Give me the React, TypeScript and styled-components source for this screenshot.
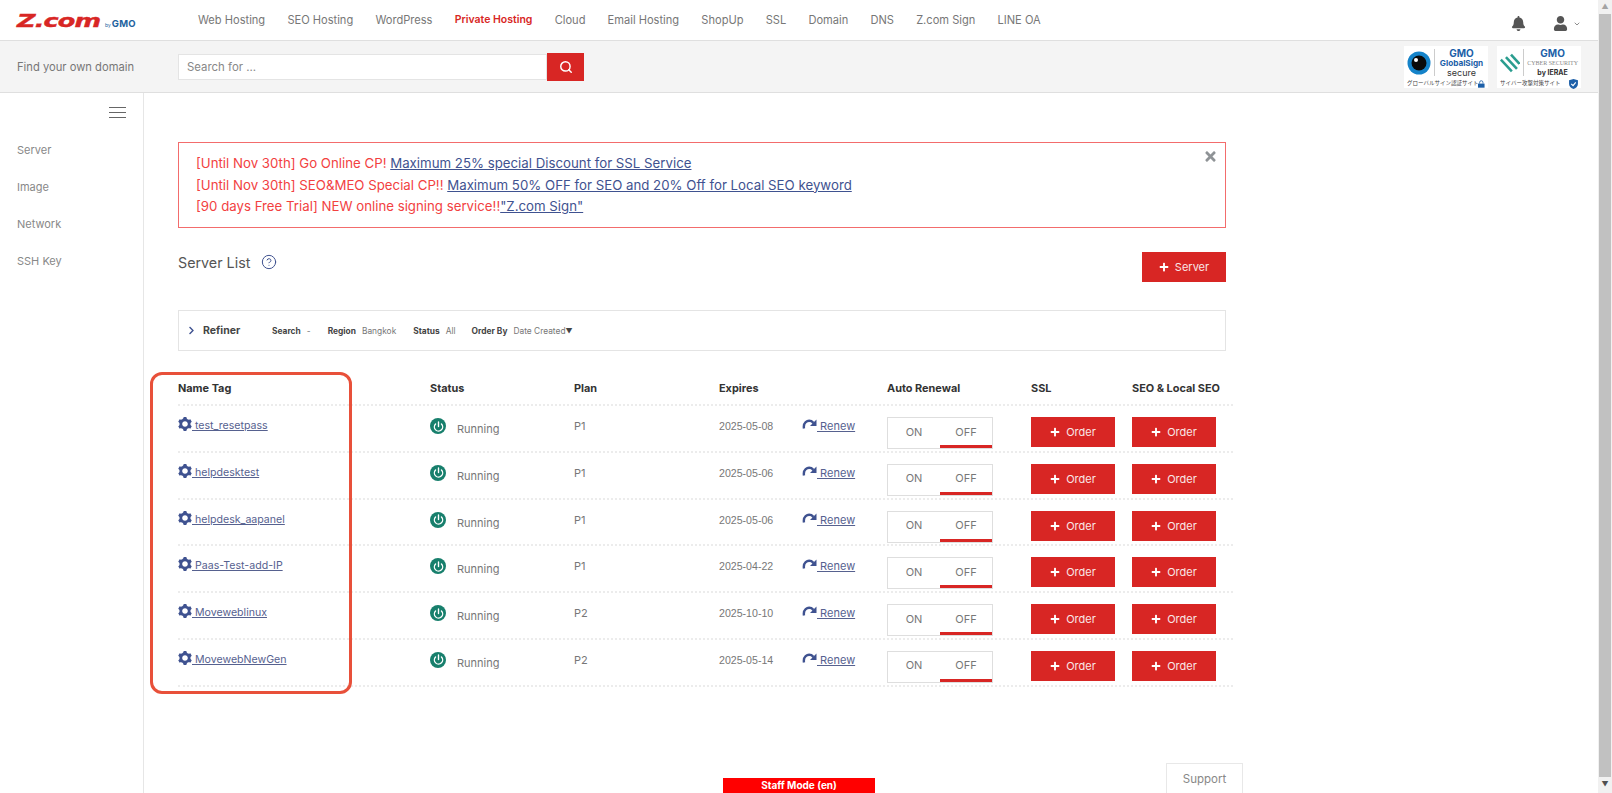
import React from "react";
import styled, { createGlobalStyle } from "styled-components";
import { FaBell, FaUser, FaPlus, FaTimes, FaChevronRight } from "react-icons/fa";
import { ImCog } from "react-icons/im";
import { Search, Power, ChevronDown, CircleHelp } from "lucide-react";

const font = `Inter, "Liberation Sans", sans-serif`;

const GlobalStyle = createGlobalStyle`
  html, body {
    margin: 0;
    padding: 0;
    height: 100%;
    overflow: hidden;
    background: #fff;
    font-family: ${font};
    color: #666;
  }
  * { box-sizing: border-box; }
`;

const Page = styled.div`
  position: relative;
  width: 1612px;
  height: 793px;
  display: flex;
  overflow: hidden;
`;

const Content = styled.div`
  width: 1598px;
  height: 793px;
  display: flex;
  flex-direction: column;
`;

const ScrollTrack = styled.div`
  width: 14px;
  background: #f1f1f1;
  display: flex;
  flex-direction: column;
  align-items: center;
`;

const ScrollArrow = styled.div<{ $dark?: boolean }>`
  height: ${(p) => (p.$dark ? 16 : 14)}px;
  color: ${(p) => (p.$dark ? "#505050" : "#a3a3a3")};
  font-size: 7px;
  line-height: ${(p) => (p.$dark ? 16 : 14)}px;
`;

const ScrollThumb = styled.div`
  width: 12px;
  flex: 1;
  background: #c1c1c1;
`;

const Header = styled.header`
  height: 41px;
  border-bottom: 1px solid #dfdfdf;
  display: flex;
  align-items: center;
  padding-left: 17px;
`;

const Logo = styled.div`
  width: 181px;
  display: flex;
  align-items: baseline;
`;

const LogoMark = styled.span`
  display: inline-block;
  width: 87px;
  font-family: "DejaVu Sans", sans-serif;
  font-weight: 700;
  font-style: italic;
  font-size: 18px;
  letter-spacing: -0.6px;
  white-space: nowrap;
  color: #d82624;
  transform: scaleX(1.42);
  transform-origin: left;
  -webkit-text-stroke: 0.4px #d82624;
`;

const LogoBy = styled.span`
  font-size: 5px;
  color: #23639e;
  margin: 0 1px 0 1px;
`;

const LogoGmo = styled.span`
  font-size: 9.5px;
  font-weight: 700;
  letter-spacing: 0.3px;
  color: #23639e;
`;

const Nav = styled.nav`
  display: flex;
  align-items: center;
  gap: 22.2px;
  flex: 1;
  padding-bottom: 1px;
`;

const NavItem = styled.a<{ $active?: boolean }>`
  font-size: ${(p) => (p.$active ? 10.5 : 11.1)}px;
  white-space: nowrap;
  color: ${(p) => (p.$active ? "#d82624" : "#777")};
  font-weight: ${(p) => (p.$active ? 600 : 400)};
`;

const HeaderIcons = styled.div`
  display: flex;
  align-items: center;
  color: #555;
  padding: 7px 17px 0 0;
`;

const UserWrap = styled.div`
  display: flex;
  align-items: center;
  gap: 5px;
  margin-left: 27px;
`;

const SearchBar = styled.div`
  height: 52px;
  background: #f4f4f4;
  border-bottom: 1px solid #dfdfdf;
  display: flex;
  align-items: center;
  padding: 0 17px 0 17px;
`;

const SearchLabel = styled.div`
  width: 161px;
  font-size: 11.2px;
  color: #777;
`;

const SearchInput = styled.div`
  width: 369px;
  height: 26px;
  background: #fff;
  border: 1px solid #e4e4e4;
  font-size: 11.4px;
  line-height: 24px;
  padding-left: 8px;
  color: #888;
`;

const SearchButton = styled.div`
  width: 37px;
  height: 28px;
  background: #d82624;
  color: #fff;
  display: flex;
  align-items: center;
  justify-content: center;
`;

const Badges = styled.div`
  margin-left: auto;
  display: flex;
  gap: 9px;
`;

const Badge = styled.div`
  width: 84px;
  height: 42px;
  background: #fff;
  display: flex;
  flex-direction: column;
  padding: 2px 3px 0;
`;

const BadgeTop = styled.div`
  display: flex;
  height: 30px;
  align-items: center;
`;

const BadgeRule = styled.div`
  width: 1px;
  height: 27px;
  background: #ccc;
  margin: 0 3px;
`;

const BadgeText = styled.div`
  flex: 1;
  display: flex;
  flex-direction: column;
  align-items: center;
  line-height: 1;
`;

const BadgeLine = styled.span<{ $size: number; $color: string; $bold?: boolean; $serif?: boolean }>`
  font-family: ${(p) => (p.$serif ? `"Liberation Serif", serif` : "inherit")};
  font-size: ${(p) => p.$size}px;
  color: ${(p) => p.$color};
  font-weight: ${(p) => (p.$bold ? 700 : 400)};
  white-space: nowrap;
  line-height: 10px;
`;

const BadgeFoot = styled.div`
  display: flex;
  align-items: center;
  justify-content: space-between;
  font-family: "Noto Sans CJK JP", sans-serif;
  font-size: 5.5px;
  line-height: 9px;
  color: #444;
  white-space: nowrap;
  margin-top: 1px;
`;

const Body = styled.div`
  flex: 1;
  display: flex;
  min-height: 0;
`;

const Sidebar = styled.aside`
  width: 144px;
  border-right: 1px solid #e6e6e6;
  padding: 14px 17px 0;
  display: flex;
  flex-direction: column;
`;

const Burger = styled.div`
  align-self: flex-end;
  width: 17px;
  height: 11px;
  border-top: 1px solid #666;
  border-bottom: 1px solid #666;
  position: relative;
  margin-bottom: 14px;
  &::after {
    content: "";
    display: block;
    height: 1px;
    margin-top: 4px;
    background: #666;
  }
`;

const SideItem = styled.a`
  font-size: 11px;
  height: 37px;
  line-height: 37px;
  color: #888;
`;

const Main = styled.main`
  flex: 1;
  padding: 49px 0 0 34px;
  position: relative;
`;

const Column = styled.div`
  width: 1048px;
`;

const Notice = styled.div`
  position: relative;
  height: 86px;
  border: 1px solid #f36c6c;
  padding: 10px 17px;
  font-size: 13.25px;
  line-height: 21.5px;
  color: #f2413f;
`;

const NoticeLink = styled.a`
  color: #3f5290;
  text-decoration: underline;
`;

const NoticeClose = styled.div`
  position: absolute;
  top: 5px;
  right: 7px;
  color: #8f9396;
  font-size: 15px;
`;

const TitleRow = styled.div`
  height: 82px;
  display: flex;
  justify-content: space-between;
  padding-top: 24px;
`;

const TitleLeft = styled.div`
  display: flex;
  align-items: center;
  gap: 11px;
  height: 20px;
  color: #3f5290;
`;

const Title = styled.h1`
  margin: 0;
  font-size: 14.3px;
  font-weight: 400;
  color: #555;
`;

const RedButton = styled.a<{ $width: number }>`
  width: ${(p) => p.$width}px;
  height: 30px;
  background: #d82624;
  color: #f8e6e6;
  display: flex;
  align-items: center;
  justify-content: center;
  gap: 6px;
  font-size: 11px;
`;

const Refiner = styled.div`
  height: 41px;
  border: 1px solid #e4e4e4;
  display: flex;
  align-items: center;
  padding-left: 8px;
  font-size: 8.4px;
  color: #777;
`;

const RefinerTitle = styled.div`
  display: flex;
  align-items: center;
  gap: 7px;
  width: 85px;
  font-size: 10.5px;
  font-weight: 700;
  color: #444;
  svg {
    color: #3f5290;
  }
`;

const RefinerKey = styled.b`
  color: #444;
  margin-right: 6px;
`;

const RefinerGroup = styled.div<{ $gap: number }>`
  margin-right: ${(p) => p.$gap}px;
  white-space: nowrap;
`;

const Arrow = styled.span`
  font-size: 7px;
  color: #444;
`;

const Table = styled.div`
  position: relative;
  width: 1055px;
  margin-top: 30px;
`;

const grid = `
  display: grid;
  grid-template-columns: 252px 144px 145px 83px 85px 144px 101px 84px 17px;
`;

const HeadRow = styled.div`
  ${grid}
  height: 23px;
  font-size: 10.9px;
  font-weight: 700;
  color: #333;
  line-height: 14px;
  white-space: nowrap;
`;

const Row = styled.div`
  ${grid}
  height: 46.8px;
  border-top: 2px dotted #ececec;
  font-size: 11px;
  color: #777;
  &:last-of-type {
    border-bottom: 2px dotted #ececec;
    height: 48.8px;
  }
`;

const Cell = styled.div`
  padding-top: 12px;
  line-height: 16px;
  white-space: nowrap;
`;

const DateCell = styled(Cell)`
  font-family: "Liberation Sans", sans-serif;
  font-size: 10.6px;
`;

const NameLink = styled.a`
  display: inline-flex;
  align-items: center;
  font-size: 10.6px;
  color: #56618f;
  text-decoration: underline;
  svg {
    color: #3f5290;
    position: relative;
    top: -2px;
  }
`;

const StatusCell = styled(Cell)`
  display: flex;
  align-items: flex-start;
  gap: 11px;
`;

const StatusDot = styled.span`
  width: 16px;
  height: 16px;
  border-radius: 50%;
  background: #177f6c;
  color: #fff;
  display: flex;
  align-items: center;
  justify-content: center;
`;

const StatusText = styled.span`
  margin-top: 3px;
`;

const RenewLink = styled.a`
  display: inline-flex;
  align-items: center;
  color: #56618f;
  text-decoration: underline;
  svg {
    position: relative;
    top: -2px;
  }
`;

const Toggle = styled.div`
  margin-top: 11px;
  width: 106px;
  height: 32px;
  border: 1px solid #dedede;
  display: flex;
`;

const ToggleSide = styled.div<{ $on?: boolean }>`
  flex: 1;
  display: flex;
  align-items: center;
  justify-content: center;
  font-size: 11px;
  color: #777;
  border-bottom: 3px solid ${(p) => (p.$on ? "#d82624" : "transparent")};
`;

const OrderCell = styled.div`
  padding-top: 11px;
`;

const Marker = styled.div`
  position: absolute;
  left: -28px;
  top: -9px;
  width: 202px;
  height: 322px;
  border: 3px solid #e8503a;
  border-radius: 12px;
  pointer-events: none;
`;

const StaffBar = styled.div`
  position: absolute;
  left: 723px;
  bottom: 0;
  width: 152px;
  height: 15px;
  background: #f00;
  color: #fff;
  font-size: 10px;
  font-weight: 700;
  line-height: 15px;
  text-align: center;
`;

const Support = styled.div`
  position: absolute;
  left: 1166px;
  bottom: 0;
  width: 77px;
  height: 30px;
  background: #fff;
  border: 1px solid #e8e8e8;
  border-bottom: none;
  color: #888;
  font-size: 11.5px;
  line-height: 30px;
  text-align: center;
`;

const navItems = [
  "Web Hosting",
  "SEO Hosting",
  "WordPress",
  "Private Hosting",
  "Cloud",
  "Email Hosting",
  "ShopUp",
  "SSL",
  "Domain",
  "DNS",
  "Z.com Sign",
  "LINE OA",
];

const servers = [
  { name: "test_resetpass", plan: "P1", expires: "2025-05-08" },
  { name: "helpdesktest", plan: "P1", expires: "2025-05-06" },
  { name: "helpdesk_aapanel", plan: "P1", expires: "2025-05-06" },
  { name: "Paas-Test-add-IP", plan: "P1", expires: "2025-04-22" },
  { name: "Moveweblinux", plan: "P2", expires: "2025-10-10" },
  { name: "MovewebNewGen", plan: "P2", expires: "2025-05-14" },
];

function EyeLogo() {
  return (
    <svg width="24" height="24" viewBox="0 0 24 24">
      <circle cx="12" cy="12" r="11.5" fill="#1583c9" />
      <circle cx="12" cy="12" r="7.5" fill="#0a0a0a" />
      <circle cx="9" cy="9" r="2" fill="#fff" />
    </svg>
  );
}

function StripeLogo() {
  return (
    <svg width="24" height="24" viewBox="0 0 24 24">
      <g stroke="#2a9d8f" strokeWidth="3" fill="none">
        <path d="M1 8 L14 22" />
        <path d="M7 5 L20 19" />
        <path d="M13 2 L23 13" />
      </g>
    </svg>
  );
}

function LockIcon() {
  return (
    <svg width="9" height="10" viewBox="0 0 8 9">
      <path d="M2 4V2.5a2 2 0 0 1 4 0V4" stroke="#1c5fa8" fill="none" />
      <rect y="4" width="8" height="5" fill="#1c5fa8" />
    </svg>
  );
}

function ShieldIcon() {
  return (
    <svg width="9" height="10" viewBox="0 0 8 9">
      <path d="M4 0 L8 1.2 V4.5 C8 7 6 8.2 4 9 C2 8.2 0 7 0 4.5 V1.2 Z" fill="#1c5fa8" />
      <path d="M2 4.3 L3.6 6 L6 3" stroke="#fff" fill="none" />
    </svg>
  );
}

function RenewIcon() {
  return (
    <svg width="15" height="14" viewBox="0 0 15 14">
      <path d="M2 11.5 C1 6 5 2.5 9.5 4.2 L11.5 6" stroke="#3f5290" strokeWidth="2.4" fill="none" />
      <path d="M14.5 2.5 V9 H8 Z" fill="#3f5290" />
    </svg>
  );
}

export default function App() {
  return (
    <Page>
      <GlobalStyle />
      <Content>
        <Header>
          <Logo>
            <LogoMark>Z.com</LogoMark>
            <LogoBy>by</LogoBy>
            <LogoGmo>GMO</LogoGmo>
          </Logo>
          <Nav>
            {navItems.map((item) => (
              <NavItem key={item} $active={item === "Private Hosting"}>
                {item}
              </NavItem>
            ))}
          </Nav>
          <HeaderIcons>
            <FaBell size={15} />
            <UserWrap>
              <FaUser size={15} />
              <ChevronDown size={8} />
            </UserWrap>
          </HeaderIcons>
        </Header>
        <SearchBar>
          <SearchLabel>Find your own domain</SearchLabel>
          <SearchInput>Search for ...</SearchInput>
          <SearchButton>
            <Search size={14} strokeWidth={2.5} />
          </SearchButton>
          <Badges>
            <Badge>
              <BadgeTop>
                <EyeLogo />
                <BadgeRule />
                <BadgeText>
                  <BadgeLine $size={10} $color="#1c5fa8" $bold>GMO</BadgeLine>
                  <BadgeLine $size={8.2} $color="#1c5fa8" $bold>GlobalSign</BadgeLine>
                  <BadgeLine $size={9} $color="#333">secure</BadgeLine>
                </BadgeText>
              </BadgeTop>
              <BadgeFoot>
                グローバルサイン認証サイト
                <LockIcon />
              </BadgeFoot>
            </Badge>
            <Badge>
              <BadgeTop>
                <StripeLogo />
                <BadgeRule />
                <BadgeText>
                  <BadgeLine $size={10} $color="#1c5fa8" $bold>GMO</BadgeLine>
                  <BadgeLine $size={6} $color="#888" $serif>CYBER SECURITY</BadgeLine>
                  <BadgeLine $size={7} $color="#333" $bold>by IERAE</BadgeLine>
                </BadgeText>
              </BadgeTop>
              <BadgeFoot>
                サイバー攻撃対策サイト
                <ShieldIcon />
              </BadgeFoot>
            </Badge>
          </Badges>
        </SearchBar>
        <Body>
          <Sidebar>
            <Burger />
            <SideItem>Server</SideItem>
            <SideItem>Image</SideItem>
            <SideItem>Network</SideItem>
            <SideItem>SSH Key</SideItem>
          </Sidebar>
          <Main>
            <Column>
              <Notice>
                [Until Nov 30th] Go Online CP! <NoticeLink>Maximum 25% special Discount for SSL Service</NoticeLink>
                <br />
                [Until Nov 30th] SEO&amp;MEO Special CP!! <NoticeLink>Maximum 50% OFF for SEO and 20% Off for Local SEO keyword</NoticeLink>
                <br />
                [90 days Free Trial] NEW online signing service!!<NoticeLink>"Z.com Sign"</NoticeLink>
                <NoticeClose>
                  <FaTimes />
                </NoticeClose>
              </Notice>
              <TitleRow>
                <TitleLeft>
                  <Title>Server List</Title>
                  <CircleHelp size={16} strokeWidth={1.5} />
                </TitleLeft>
                <RedButton $width={84}>
                  <FaPlus size={10} color="#fff" />
                  Server
                </RedButton>
              </TitleRow>
              <Refiner>
                <RefinerTitle>
                  <FaChevronRight size={9} />
                  Refiner
                </RefinerTitle>
                <RefinerGroup $gap={17}>
                  <RefinerKey>Search</RefinerKey>-
                </RefinerGroup>
                <RefinerGroup $gap={17}>
                  <RefinerKey>Region</RefinerKey>Bangkok
                </RefinerGroup>
                <RefinerGroup $gap={16}>
                  <RefinerKey>Status</RefinerKey>All
                </RefinerGroup>
                <RefinerGroup $gap={0}>
                  <RefinerKey>Order By</RefinerKey>Date Created<Arrow>▼</Arrow>
                </RefinerGroup>
              </Refiner>
              <Table>
                <Marker />
                <HeadRow>
                  <div>Name Tag</div>
                  <div>Status</div>
                  <div>Plan</div>
                  <div>Expires</div>
                  <div />
                  <div>Auto Renewal</div>
                  <div>SSL</div>
                  <div>SEO &amp; Local SEO</div>
                </HeadRow>
                {servers.map((server) => (
                  <Row key={server.name}>
                    <Cell>
                      <NameLink>
                        <ImCog size={14} />
                        &nbsp;{server.name}
                      </NameLink>
                    </Cell>
                    <StatusCell>
                      <StatusDot>
                        <Power size={11} strokeWidth={3} />
                      </StatusDot>
                      <StatusText>Running</StatusText>
                    </StatusCell>
                    <Cell>{server.plan}</Cell>
                    <DateCell>{server.expires}</DateCell>
                    <Cell>
                      <RenewLink>
                        <RenewIcon />
                        &nbsp;Renew
                      </RenewLink>
                    </Cell>
                    <div>
                      <Toggle>
                        <ToggleSide>ON</ToggleSide>
                        <ToggleSide $on>OFF</ToggleSide>
                      </Toggle>
                    </div>
                    <OrderCell>
                      <RedButton $width={84}>
                        <FaPlus size={10} color="#fff" />
                        Order
                      </RedButton>
                    </OrderCell>
                    <OrderCell>
                      <RedButton $width={84}>
                        <FaPlus size={10} color="#fff" />
                        Order
                      </RedButton>
                    </OrderCell>
                  </Row>
                ))}
              </Table>
            </Column>
          </Main>
        </Body>
      </Content>
      <ScrollTrack>
        <ScrollArrow>▲</ScrollArrow>
        <ScrollThumb />
        <ScrollArrow $dark>▼</ScrollArrow>
      </ScrollTrack>
      <StaffBar>Staff Mode (en)</StaffBar>
      <Support>Support</Support>
    </Page>
  );
}
